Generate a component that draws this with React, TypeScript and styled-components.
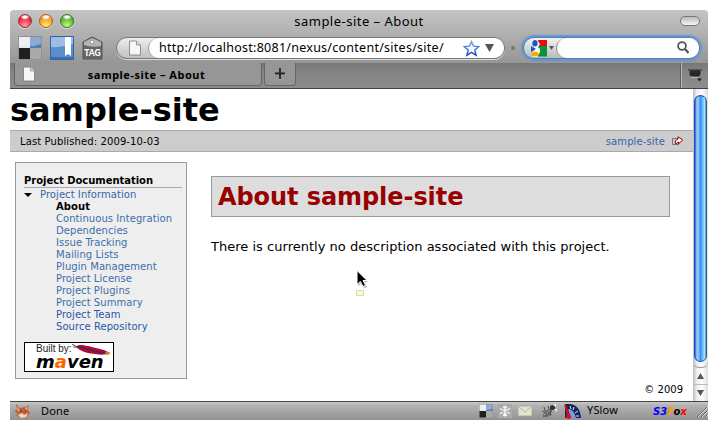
import React from 'react';
import styled, { createGlobalStyle } from 'styled-components';

const GlobalStyle = createGlobalStyle`
  * { box-sizing: border-box; }
  html, body { margin: 0; padding: 0; background: #fff; }
  body { width: 718px; height: 430px; overflow: hidden; }
  svg { display: block; flex: none; }
`;

const ui = `"Noto Sans", "Open Sans", sans-serif`;
const page = `"DejaVu Sans", Verdana, sans-serif`;

const Window = styled.main`
  width: 698px;
  height: 410px;
  margin: 10px;
  display: flex;
  flex-direction: column;
  background: #fff;
  border-radius: 4px 4px 0 0;
  overflow: hidden;
  font-family: ${ui};
  color: #000;
  white-space: nowrap;
`;

const Chrome = styled.header`
  flex: none;
  height: 53px;
  background: linear-gradient(#c4c4c4, #b0b0b0 45%, #969696);
`;

const TitleBar = styled.div`
  height: 27px;
  display: grid;
  grid-template-columns: 80px 1fr 80px;
  align-items: center;
  padding: 0 8px;
`;

const Lights = styled.div`
  display: flex;
  gap: 7px;
  margin-top: -5px;
`;

const Light = styled.i<{ $edge: string; $base: string; $glow: string }>`
  width: 14px;
  height: 14px;
  border-radius: 50%;
  border: 1px solid ${(p) => p.$edge};
  background: radial-gradient(ellipse 5px 3px at 50% 16%, #fff 30%, transparent 100%),
    radial-gradient(circle at 50% 88%, ${(p) => p.$glow}, ${(p) => p.$base} 68%);
  box-shadow: 0 1px 0 #ddd;
`;

const WindowTitle = styled.h1`
  margin: -5px 0 0;
  text-align: center;
  font: 400 13px/20px ${ui};
  letter-spacing: 0.48px;
`;

const Pill = styled.i`
  justify-self: end;
  width: 20px;
  height: 10px;
  margin: -5px 0 0;
  border: 1px solid #777;
  border-radius: 5px;
  background: linear-gradient(#bbb, #f5f5f5);
`;

const Toolbar = styled.div`
  height: 26px;
  display: flex;
  align-items: center;
  padding: 0 8px 4px;
`;

const ToolIcon = styled.div`
  width: 24px;
  margin-right: 8px;
`;

const AddressBar = styled.div`
  width: 389px;
  height: 22px;
  margin-left: 2px;
  display: flex;
  align-items: center;
  border: 1px solid #777;
  border-radius: 11px;
  background: linear-gradient(#eee, #c0c0c0);
  box-shadow: 0 1px 0 #ddd;
  padding-left: 12px;
`;

const AddressField = styled.div`
  flex: 1;
  height: 20px;
  margin-left: 7px;
  padding: 0 10px;
  display: flex;
  align-items: center;
  gap: 5px;
  border-left: 1px solid #999;
  border-radius: 10px;
  background: #fff;
`;

const Url = styled.span`
  flex: 1;
  font-size: 12.5px;
  line-height: 18px;
  letter-spacing: 0.26px;
`;

const Dot = styled.i`
  width: 4px;
  height: 4px;
  border-radius: 50%;
  background: #777;
  margin: 0 8px 0 6px;
`;

const SearchBar = styled.div`
  width: 177px;
  height: 22px;
  display: flex;
  align-items: center;
  gap: 2px;
  border: 1px solid #4980c0;
  border-radius: 11px;
  background: linear-gradient(#f3f3f3, #bbb);
  box-shadow: 0 0 1px 2px #6796cf;
  padding-left: 6px;
`;

const SearchField = styled.div`
  flex: 1;
  height: 20px;
  padding: 0 10px 2px 0;
  display: flex;
  align-items: center;
  justify-content: flex-end;
  border-left: 1px solid #888;
  border-radius: 10px;
  background: #fff;
`;

const TabStrip = styled.nav`
  flex: none;
  height: 26px;
  display: flex;
  background: linear-gradient(#777, #848484 35%, #8c8c8c);
  border-bottom: 1px solid #414141;
  padding-left: 4px;
`;

const Tab = styled.div<{ $width: number }>`
  width: ${(p) => p.$width}px;
  height: 23px;
  display: flex;
  align-items: center;
  padding-left: 8px;
  border: 1px solid #666;
  border-top: 0;
  border-radius: 0 0 4px 4px;
  background: #969696;
  margin-right: 2px;
`;

const TabTitle = styled.b`
  flex: 1;
  text-align: center;
  font: 700 11px/18px ${ui};
  letter-spacing: 0.5px;
  margin-right: 3px;
  padding-top: 1px;
`;

const TabMenu = styled.div`
  width: 27px;
  margin-left: auto;
  border-left: 1px solid #bbb;
  box-shadow: -1px 0 0 #5d5d5d;
  padding: 6px 0 0 6px;
`;

const Body = styled.div`
  flex: 1;
  min-height: 0;
  display: flex;
`;

const Page = styled.section`
  width: 683px;
  font-family: ${page};
  display: flex;
  flex-direction: column;
`;

const SiteName = styled.h1`
  height: 41px;
  margin: 0;
  font: 700 32px/43px ${page};
  letter-spacing: -0.02px;
`;

const Breadcrumbs = styled.div`
  height: 22px;
  display: flex;
  justify-content: space-between;
  align-items: center;
  padding: 0 9px 0 10px;
  border: solid #aaa;
  border-width: 1px 0;
  background: #ccc;
  font-size: 10px;
  letter-spacing: 0.11px;
`;

const ExternalLink = styled.a`
  display: flex;
  align-items: center;
  gap: 7px;
  color: #36a;
`;

const Columns = styled.div`
  display: flex;
  align-items: flex-start;
  gap: 24px;
  padding: 10px 0 0 5px;
`;

const Sidebar = styled.aside`
  width: 172px;
  height: 217px;
  border: 1px solid #999;
  background: #eee;
  padding: 11px 4px 0 8px;
  font-size: 10px;
  line-height: 12px;
  letter-spacing: 0.06px;
`;

const SideHeading = styled.h2`
  height: 14px;
  margin: 0 0 1px;
  border-bottom: 1px solid #aaa;
  font: 700 10px/13px ${page};
  letter-spacing: -0.04px;
`;

const Parent = styled.div`
  display: flex;
  align-items: center;
  gap: 8px;
  color: #36a;
`;

const Links = styled.ul`
  list-style: none;
  margin: 0;
  padding: 0 0 0 32px;
`;

const LinkItem = styled.li<{ $current?: boolean; $visited?: boolean }>`
  height: 12px;
  color: ${(p) => (p.$current ? '#000' : p.$visited ? '#2a56a8' : '#3b6fa9')};
  font-weight: ${(p) => (p.$current ? 700 : 400)};
`;

const Badge = styled.div`
  width: 90px;
  height: 30px;
  margin-top: 9px;
  border: 1px solid #000;
  background: #fff;
  display: flex;
  flex-direction: column;
  padding: 1px 0 0 11px;
  letter-spacing: 0;
`;

const BadgeTop = styled.div`
  display: flex;
  height: 11px;
  font: 10px/10px "Liberation Sans", sans-serif;
  color: #222;
`;

const BadgeCaption = styled.span`
  width: 36px;
  height: 10px;
  letter-spacing: 0;
`;

const BadgeName = styled.b`
  height: 15px;
  font: italic 700 18px/13px ${page};
  letter-spacing: 0;
`;

const Article = styled.article`
  width: 459px;
  padding-top: 14px;
`;

const ArticleTitle = styled.h2`
  height: 41px;
  margin: 0 0 20px;
  padding-left: 6px;
  border: 1px solid #999;
  background: #ddd;
  color: #900;
  font: 700 24px/41px ${page};
  letter-spacing: -0.07px;
`;

const Paragraph = styled.p`
  margin: 0;
  font-size: 13px;
  line-height: 20px;
  letter-spacing: 0.02px;
`;

const Copyright = styled.footer`
  margin-top: auto;
  height: 18px;
  padding-right: 10px;
  text-align: right;
  font: 10px/13px ${page};
`;

const Scrollbar = styled.div`
  width: 15px;
  display: flex;
  flex-direction: column;
  background: linear-gradient(90deg, #bbb, #eee 25%, #fff 60%, #ddd);
`;

const Thumb = styled.div`
  height: 267px;
  margin: 6px 1px 0;
  border: 1px solid #184fbb;
  border-right-color: #3c5c80;
  border-radius: 7px;
  background: linear-gradient(90deg, #2457d8, #a3d0fa 18%, #75b4f3 38%, #328eed 48%, #66bdfb 70%, #a4eaff 88%, #3a80b8);
`;

const TrackEnd = styled.div`
  height: 6px;
  border-bottom: 1px solid #999;
  border-radius: 0 0 7px 7px;
`;

const ScrollButton = styled.div`
  flex: 1;
  display: grid;
  place-items: center;

  & + & {
    border-top: 1px solid #bbb;
  }
`;

const StatusBar = styled.footer`
  flex: none;
  height: 19px;
  display: flex;
  align-items: center;
  border-top: 1px solid #444;
  background: linear-gradient(#c8c8c8, #b2b2b2 20%, #929292);
  padding-left: 4px;
`;

const StatusText = styled.span<{ $gap: number; $width: number; $up?: number }>`
  margin-left: ${(p) => p.$gap}px;
  width: ${(p) => p.$width}px;
  padding-bottom: ${(p) => p.$up ?? 0}px;
  font-size: 11px;
  line-height: 16px;
  letter-spacing: 0.15px;
`;

const StatusIcons = styled.div`
  margin-left: auto;
  width: 102px;
  display: grid;
  grid-template-columns: 19px 20px 23px 23px 17px;
  align-items: center;
`;

const S3Fox = styled.b`
  font: italic 700 10px/14px ${page};
  letter-spacing: 0.1px;
  width: 43px;
  padding-top: 1px;
  color: #00f;
`;

const Letter = styled.span<{ $color: string }>`
  color: ${(p) => p.$color};
`;

const Pointer = styled.div`
  position: absolute;
  left: 356px;
  top: 270px;
`;

const DocIcon = () => (
  <svg width="12" height="16" viewBox="0 0 12 16">
    <path d="M.5 1h7L11.5 5v10H.5z" fill="#f7f7f7" stroke="#777" strokeWidth=".8" />
    <path d="M7.5 1v4h4" fill="#ddd" stroke="#888" strokeWidth=".8" />
  </svg>
);

const TilesIcon = ({ size }: { size: number }) => (
  <svg width={size} height={size} viewBox="0 0 24 24">
    <path d="M0 0h24v24H0z" fill="#909090" />
    <path d="M1 1h11v11H1z" fill="#e3e7eb" />
    <path d="M12 1h11v11H12z" fill="#4d7eba" />
    <path d="M1 12h11v11H1z" fill="#202020" />
    <path d="M12 12h11v11H12z" fill="#aaa" />
    <path d="M1 1h22v7Q13 12 1 10z" fill="#fff" opacity=".35" />
  </svg>
);

const BookmarkIcon = () => (
  <svg width="24" height="24" viewBox="0 0 24 24">
    <path d="M.5.5h23v23H.5z" fill="#5a8dcc" stroke="#2c66a8" />
    <path d="M1 1h22v7Q12 12 1 11z" fill="#9dbde2" />
    <path d="M15 1h6v19l-3-2-3 2z" fill="#fff" />
    <path d="M1 22h22" stroke="#1d5294" />
  </svg>
);

const TagIcon = () => (
  <svg width="21" height="24" viewBox="0 0 21 24">
    <path d="M1 6 10 1l10 5v17H1z" fill="#666" stroke="#555" />
    <path d="M2 6 10 2l9 4v4Q10 12 2 9z" fill="#b5b5b5" />
    <circle cx="10" cy="6" r="1.8" fill="#fff" stroke="#777" strokeWidth=".6" />
    <text x="10.5" y="19.5" textAnchor="middle" fontFamily="Lato, sans-serif" fontWeight="900" fontSize="8.5" fill="#fff">TAG</text>
  </svg>
);

const StarIcon = () => (
  <svg width="17" height="17" viewBox="0 0 17 17">
    <defs>
      <linearGradient id="star" x2="0" y2="1"><stop stopColor="#7aa4e4" /><stop offset="1" stopColor="#1746c8" /></linearGradient>
    </defs>
    <path d="m8.5 1.5 2.1 4.6 5.1.5-3.9 3.4 1.3 5.2-4.6-2.8-4.6 2.8 1.3-5.2-3.9-3.4 5.1-.5z" fill="#f6f9ff" stroke="url(#star)" strokeWidth="1.4" />
  </svg>
);

const Triangle = ({ w, h, up, color = '#555' }: { w: number; h: number; up?: boolean; color?: string }) => (
  <svg width={w} height={h} viewBox="0 0 10 10" preserveAspectRatio="none">
    <path d={up ? 'M0 10h10L5 0z' : 'M0 0h10L5 10z'} fill={color} />
  </svg>
);

const GoogleIcon = () => (
  <svg width="17" height="17" viewBox="0 0 17 17">
    <path d="M8 0h9v6H8z" fill="#e80c0c" />
    <path d="M8 6h9v10.5H8z" fill="#079337" />
    <path d="M2 0h5l3 4-2 3q4 3 1 7l-2 3H3l-2-4 4-3z" fill="#fff" />
    <ellipse cx="5" cy="3.2" rx="2.6" ry="3.2" fill="#1558c0" />
    <path d="m1 6 5 3-5 3z" fill="#1558c0" />
    <ellipse cx="5" cy="14" rx="3.8" ry="2.5" fill="#f5ae06" />
  </svg>
);

const SearchIcon = () => (
  <svg width="12" height="13" viewBox="0 0 12 13">
    <circle cx="5" cy="5" r="3.9" fill="none" stroke="#555" strokeWidth="1.8" />
    <path d="m8 8 3.5 4" stroke="#555" strokeWidth="2.3" />
  </svg>
);

const PlusIcon = () => (
  <svg width="13" height="12" viewBox="0 0 13 12">
    <path d="M7 1v11M2 6.5h11" stroke="#bbb" strokeWidth="1.2" />
    <path d="M7 0v11M2 5.5h10" stroke="#222" strokeWidth="1.8" />
  </svg>
);

const TabListIcon = () => (
  <svg width="15" height="13" viewBox="0 0 15 13">
    <path d="M3 8.5h7" stroke="#bbb" />
    <path d="M0 1h14M2 2h10v3q0 2-2 2H4Q2 7 2 5z" stroke="#262626" fill="#262626" />
    <path d="M9 9.5h5l-2.5 3z" fill="#222" />
  </svg>
);

const ExternalIcon = () => (
  <svg width="12" height="10" viewBox="0 0 12 10">
    <path d="M.5 2.5h6v6h-6z" fill="#ccc" stroke="#777" />
    <path d="M3 7q0-3 3-4V.8L10.8 4 6.5 8V6Q5 6 4.3 8z" fill="#fff" stroke="#900" />
  </svg>
);

const FeatherIcon = () => (
  <svg width="40" height="12" viewBox="0 0 40 12">
    <path d="m0 0 7 4M1 3l4 0" stroke="#222" strokeWidth=".8" />
    <path d="M4 3c2-3 6-2 12-1l16 4 6 3q-6 3-15 1Q10 9 4 3" fill="#b20c35" />
    <path d="M6 3q8 1 15 4l11 2" stroke="#4d2360" strokeWidth="1.6" fill="none" />
    <path d="m33 8 6 1-4 2.5z" fill="#bca02b" />
  </svg>
);

const FoxIcon = () => (
  <svg width="17" height="15" viewBox="0 0 17 15">
    <path d="m2 0 4 4 5-1 4-2-1 5 2 3-4 4-5 1-5-3 2-1-4-3 3-1z" fill="#c0603a" />
    <path d="m3 2 3 4-2 2zM11 4l3-2-1 5z" fill="#eca47a" />
    <path d="m4 11 4-2 2 2 4-2-2 4-5 1z" fill="#f3d9ba" />
    <path d="M6 7h2M11 7h1.5" stroke="#533" />
  </svg>
);

const SnowIcon = () => (
  <svg width="14" height="14" viewBox="0 0 14 14">
    <path d="M0 0h14v14H0z" fill="#aaa" />
    <path d="M7 1.5v11M2 4.5l10 5M12 4.5l-10 5M5 2.5l2 2 2-2M5 11.5l2-2 2 2" fill="none" stroke="#f8f8f8" strokeWidth="1.3" />
  </svg>
);

const MailIcon = () => (
  <svg width="14" height="10" viewBox="0 0 14 10">
    <path d="M.5.5h13v9H.5z" fill="#e4e3d0" stroke="#c9c7ae" />
    <path d="m1 1 6 5 6-5" fill="none" stroke="#b5b19c" />
  </svg>
);

const BugIcon = () => (
  <svg width="17" height="15" viewBox="0 0 17 15">
    <path d="m3 3 3 10M1 7l9 4M7 2l3 9M2 13l4-3M11 3l-2 9" stroke="#444" strokeWidth=".9" />
    <ellipse cx="6.5" cy="9" rx="5.5" ry="2.6" fill="#666" transform="rotate(-40 6.5 9)" />
    <circle cx="11.5" cy="3.5" r="2.6" fill="#333" />
    <path d="m12 1 3-1v3zM13 5h3v3z" fill="#f4f4f4" />
    <path d="m3 11 6-5" stroke="#ccc" strokeDasharray="1 1" />
  </svg>
);

const GaugeIcon = () => (
  <svg width="17" height="15" viewBox="0 0 17 15">
    <path d="M1 0h5q10 1 11 14H1z" fill="#14245c" />
    <path d="m6 2 1 3M10 3 9 6M14 7l-3 2M15 12h-3" stroke="#dce4ff" />
    <path d="M4 5q6 0 8 9H7z" fill="#7e9cd1" />
    <path d="m1 1 4 12" stroke="#f00817" strokeWidth="2" />
    <circle cx="4.5" cy="12.5" r="2.4" fill="#ea0716" />
  </svg>
);

const ResizeIcon = () => (
  <svg width="12" height="13" viewBox="0 0 12 13">
    <path d="M1 12 11 2M5 12l6-6M9 12l2-2" stroke="#ddd" transform="translate(1 0)" />
    <path d="M1 12 11 2M5 12l6-6M9 12l2-2" stroke="#666" />
  </svg>
);

const CursorIcon = () => (
  <svg width="13" height="27" viewBox="0 0 13 27">
    <path d="M2 3v13l3-2 3 4 3-1-2-5h3z" fill="#bbb" />
    <path d="M1 .5v14l3.4-3 2.5 5 2.6-1.2-2.4-4.8H11z" fill="#000" stroke="#fff" />
    <path d="M.5 20.5h7v5h-7z" fill="#ffffbd" stroke="#d8d8c8" />
  </svg>
);

const reports = [
  'About', 'Continuous Integration', 'Dependencies', 'Issue Tracking', 'Mailing Lists', 'Plugin Management',
  'Project License', 'Project Plugins', 'Project Summary', 'Project Team', 'Source Repository',
];

export default function App() {
  return (
    <>
      <GlobalStyle />
      <Window>
        <Chrome>
          <TitleBar>
            <Lights>
              <Light $edge="#8e343b" $base="#e91e35" $glow="#ff9daa" />
              <Light $edge="#a36128" $base="#f69220" $glow="#fff16e" />
              <Light $edge="#397629" $base="#4ead31" $glow="#c8ff75" />
            </Lights>
            <WindowTitle>sample-site – About</WindowTitle>
            <Pill />
          </TitleBar>
          <Toolbar>
            <ToolIcon><TilesIcon size={24} /></ToolIcon>
            <ToolIcon><BookmarkIcon /></ToolIcon>
            <ToolIcon><TagIcon /></ToolIcon>
            <AddressBar>
              <DocIcon />
              <AddressField>
                <Url>http://localhost:8081/nexus/content/sites/site/</Url>
                <StarIcon />
                <Triangle w={9} h={8} />
              </AddressField>
            </AddressBar>
            <Dot />
            <SearchBar>
              <GoogleIcon />
              <Triangle w={5} h={4} />
              <SearchField><SearchIcon /></SearchField>
            </SearchBar>
          </Toolbar>
        </Chrome>
        <TabStrip>
          <Tab $width={248}>
            <DocIcon />
            <TabTitle>sample-site – About</TabTitle>
          </Tab>
          <Tab $width={32}>
            <PlusIcon />
          </Tab>
          <TabMenu><TabListIcon /></TabMenu>
        </TabStrip>
        <Body>
          <Page>
            <SiteName>sample-site</SiteName>
            <Breadcrumbs>
              <span>Last Published: 2009-10-03</span>
              <ExternalLink>sample-site<ExternalIcon /></ExternalLink>
            </Breadcrumbs>
            <Columns>
              <Sidebar>
                <SideHeading>Project Documentation</SideHeading>
                <Parent><Triangle w={8} h={4} color="#000" />Project Information</Parent>
                <Links>
                  {reports.map((r, i) => (
                    <LinkItem key={r} $current={i === 0} $visited={i > 8}>{r}</LinkItem>
                  ))}
                </Links>
                <Badge>
                  <BadgeTop><BadgeCaption>Built by:</BadgeCaption><FeatherIcon /></BadgeTop>
                  <BadgeName>m<Letter $color="#f60">a</Letter>ven</BadgeName>
                </Badge>
              </Sidebar>
              <Article>
                <ArticleTitle>About sample-site</ArticleTitle>
                <Paragraph>There is currently no description associated with this project.</Paragraph>
              </Article>
            </Columns>
            <Copyright>© 2009</Copyright>
          </Page>
          <Scrollbar>
            <Thumb />
            <TrackEnd />
            <ScrollButton><Triangle w={7} h={6} up /></ScrollButton>
            <ScrollButton><Triangle w={7} h={6} /></ScrollButton>
          </Scrollbar>
        </Body>
        <StatusBar>
          <FoxIcon />
          <StatusText $gap={10} $width={60}>Done</StatusText>
          <StatusIcons>
            <TilesIcon size={14} />
            <SnowIcon />
            <MailIcon />
            <BugIcon />
            <GaugeIcon />
          </StatusIcons>
          <StatusText $gap={6} $width={66} $up={3}>YSlow</StatusText>
          <S3Fox>S3<Letter $color="#f90">F</Letter><Letter $color="#000">o</Letter><Letter $color="#f00">x</Letter></S3Fox>
          <ResizeIcon />
        </StatusBar>
      </Window>
      <Pointer><CursorIcon /></Pointer>
    </>
  );
}
